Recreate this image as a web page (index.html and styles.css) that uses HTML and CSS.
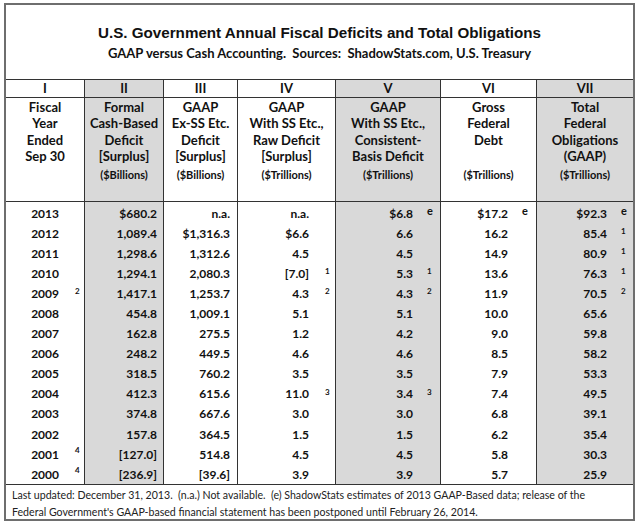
FILE: index.html
```html
<!DOCTYPE html>
<html>
<head>
<meta charset="utf-8">
<link rel="stylesheet" href="styles.css">
</head>
<body>
<div class="sheet">
  <div class="titlebox">
    <div class="title">U.S. Government Annual Fiscal Deficits and Total Obligations</div>
    <div class="subtitle">GAAP versus Cash Accounting.&nbsp; Sources:&nbsp; ShadowStats.com, U.S. Treasury</div>
  </div>
  <div class="grid">
    <div class="num c1">I</div>
    <div class="num c2 g">II</div>
    <div class="num c3">III</div>
    <div class="num c4">IV</div>
    <div class="num c5 g">V</div>
    <div class="num c6">VI</div>
    <div class="num c7 g">VII</div>

    <div class="hd c1"><div class="hl">Fiscal<br>Year<br>Ended<br>Sep 30</div></div>
    <div class="hd c2 g"><div class="hl">Formal<br>Cash-Based<br>Deficit<br>[Surplus]</div><div class="unit">($Billions)</div></div>
    <div class="hd c3"><div class="hl">GAAP<br>Ex-SS Etc.<br>Deficit<br>[Surplus]</div><div class="unit">($Billions)</div></div>
    <div class="hd c4"><div class="hl">GAAP<br>With SS Etc.,<br>Raw Deficit<br>[Surplus]</div><div class="unit">($Trillions)</div></div>
    <div class="hd c5 g"><div class="hl">GAAP<br>With SS Etc.,<br>Consistent-<br>Basis Deficit</div><div class="unit">($Trillions)</div></div>
    <div class="hd c6"><div class="hl">Gross<br>Federal<br>Debt</div><div class="unit">($Trillions)</div></div>
    <div class="hd c7 g"><div class="hl">Total<br>Federal<br>Obligations<br>(GAAP)</div><div class="unit">($Trillions)</div></div>

    <div class="d c1 first"><span>2013</span><i></i></div>
    <div class="d c2 g first"><span>$680.2</span><i></i></div>
    <div class="d c3 first"><span>n.a.</span><i></i></div>
    <div class="d c4 first"><span>n.a.</span><i></i></div>
    <div class="d c5 g first"><span>$6.8</span><i class="e">e</i></div>
    <div class="d c6 first"><span>$17.2</span><i class="e">e</i></div>
    <div class="d c7 g first"><span>$92.3</span><i class="e">e</i></div>

    <div class="d c1"><span>2012</span><i></i></div>
    <div class="d c2 g"><span>1,089.4</span><i></i></div>
    <div class="d c3"><span>$1,316.3</span><i></i></div>
    <div class="d c4"><span>$6.6</span><i></i></div>
    <div class="d c5 g"><span>6.6</span><i></i></div>
    <div class="d c6"><span>16.2</span><i></i></div>
    <div class="d c7 g"><span>85.4</span><i>1</i></div>

    <div class="d c1"><span>2011</span><i></i></div>
    <div class="d c2 g"><span>1,298.6</span><i></i></div>
    <div class="d c3"><span>1,312.6</span><i></i></div>
    <div class="d c4"><span>4.5</span><i></i></div>
    <div class="d c5 g"><span>4.5</span><i></i></div>
    <div class="d c6"><span>14.9</span><i></i></div>
    <div class="d c7 g"><span>80.9</span><i>1</i></div>

    <div class="d c1"><span>2010</span><i></i></div>
    <div class="d c2 g"><span>1,294.1</span><i></i></div>
    <div class="d c3"><span>2,080.3</span><i></i></div>
    <div class="d c4"><span>[7.0]</span><i>1</i></div>
    <div class="d c5 g"><span>5.3</span><i>1</i></div>
    <div class="d c6"><span>13.6</span><i></i></div>
    <div class="d c7 g"><span>76.3</span><i>1</i></div>

    <div class="d c1"><span>2009</span><i>2</i></div>
    <div class="d c2 g"><span>1,417.1</span><i></i></div>
    <div class="d c3"><span>1,253.7</span><i></i></div>
    <div class="d c4"><span>4.3</span><i>2</i></div>
    <div class="d c5 g"><span>4.3</span><i>2</i></div>
    <div class="d c6"><span>11.9</span><i></i></div>
    <div class="d c7 g"><span>70.5</span><i>2</i></div>

    <div class="d c1"><span>2008</span><i></i></div>
    <div class="d c2 g"><span>454.8</span><i></i></div>
    <div class="d c3"><span>1,009.1</span><i></i></div>
    <div class="d c4"><span>5.1</span><i></i></div>
    <div class="d c5 g"><span>5.1</span><i></i></div>
    <div class="d c6"><span>10.0</span><i></i></div>
    <div class="d c7 g"><span>65.6</span><i></i></div>

    <div class="d c1"><span>2007</span><i></i></div>
    <div class="d c2 g"><span>162.8</span><i></i></div>
    <div class="d c3"><span>275.5</span><i></i></div>
    <div class="d c4"><span>1.2</span><i></i></div>
    <div class="d c5 g"><span>4.2</span><i></i></div>
    <div class="d c6"><span>9.0</span><i></i></div>
    <div class="d c7 g"><span>59.8</span><i></i></div>

    <div class="d c1"><span>2006</span><i></i></div>
    <div class="d c2 g"><span>248.2</span><i></i></div>
    <div class="d c3"><span>449.5</span><i></i></div>
    <div class="d c4"><span>4.6</span><i></i></div>
    <div class="d c5 g"><span>4.6</span><i></i></div>
    <div class="d c6"><span>8.5</span><i></i></div>
    <div class="d c7 g"><span>58.2</span><i></i></div>

    <div class="d c1"><span>2005</span><i></i></div>
    <div class="d c2 g"><span>318.5</span><i></i></div>
    <div class="d c3"><span>760.2</span><i></i></div>
    <div class="d c4"><span>3.5</span><i></i></div>
    <div class="d c5 g"><span>3.5</span><i></i></div>
    <div class="d c6"><span>7.9</span><i></i></div>
    <div class="d c7 g"><span>53.3</span><i></i></div>

    <div class="d c1"><span>2004</span><i></i></div>
    <div class="d c2 g"><span>412.3</span><i></i></div>
    <div class="d c3"><span>615.6</span><i></i></div>
    <div class="d c4"><span>11.0</span><i>3</i></div>
    <div class="d c5 g"><span>3.4</span><i>3</i></div>
    <div class="d c6"><span>7.4</span><i></i></div>
    <div class="d c7 g"><span>49.5</span><i></i></div>

    <div class="d c1"><span>2003</span><i></i></div>
    <div class="d c2 g"><span>374.8</span><i></i></div>
    <div class="d c3"><span>667.6</span><i></i></div>
    <div class="d c4"><span>3.0</span><i></i></div>
    <div class="d c5 g"><span>3.0</span><i></i></div>
    <div class="d c6"><span>6.8</span><i></i></div>
    <div class="d c7 g"><span>39.1</span><i></i></div>

    <div class="d c1"><span>2002</span><i></i></div>
    <div class="d c2 g"><span>157.8</span><i></i></div>
    <div class="d c3"><span>364.5</span><i></i></div>
    <div class="d c4"><span>1.5</span><i></i></div>
    <div class="d c5 g"><span>1.5</span><i></i></div>
    <div class="d c6"><span>6.2</span><i></i></div>
    <div class="d c7 g"><span>35.4</span><i></i></div>

    <div class="d c1"><span>2001</span><i class="hi">4</i></div>
    <div class="d c2 g"><span>[127.0]</span><i></i></div>
    <div class="d c3"><span>514.8</span><i></i></div>
    <div class="d c4"><span>4.5</span><i></i></div>
    <div class="d c5 g"><span>4.5</span><i></i></div>
    <div class="d c6"><span>5.8</span><i></i></div>
    <div class="d c7 g"><span>30.3</span><i></i></div>

    <div class="d c1 last"><span>2000</span><i class="hi">4</i></div>
    <div class="d c2 g last"><span>[236.9]</span><i></i></div>
    <div class="d c3 last"><span>[39.6]</span><i></i></div>
    <div class="d c4 last"><span>3.9</span><i></i></div>
    <div class="d c5 g last"><span>3.9</span><i></i></div>
    <div class="d c6 last"><span>5.7</span><i></i></div>
    <div class="d c7 g last"><span>25.9</span><i></i></div>
  </div>
  <div class="foot">Last updated: December 31, 2013.&nbsp; (n.a.) Not available.&nbsp; (e) ShadowStats estimates of 2013 GAAP-Based data; release of the<br>Federal Government's GAAP-based financial statement has been postponed until February 26, 2014.</div>
</div>
</body>
</html>
```

FILE: styles.css
```css
html, body {
  margin: 0;
  padding: 0;
  background: #ffffff;
}

body {
  font-family: Lato, "Open Sans", sans-serif;
  color: #111;
}

.sheet {
  margin: 3px 0 0 4px;
  width: 631px;
  height: 518px;
  box-sizing: border-box;
  border: 2px solid #6e6e6e;
  display: flex;
  flex-direction: column;
  overflow: hidden;
}

.sheet > div {
  flex-shrink: 0;
}

.titlebox {
  height: 75px;
  box-sizing: border-box;
  border-bottom: 1px solid #333;
  padding-top: 18px;
  text-align: center;
}

.title {
  font-family: "Liberation Sans", Arial, sans-serif;
  font-weight: bold;
  font-size: 15.2px;
  line-height: 20px;
}

.subtitle {
  margin-top: 1px;
  font-weight: bold;
  font-size: 13px;
  line-height: 18px;
}

.grid {
  display: grid;
  grid-template-columns: 78px 79px 74px 98px 105px 96px 97px;
  grid-auto-rows: auto;
}

.grid > div {
  box-sizing: border-box;
}

.c2, .c3, .c4, .c5, .c6, .c7 {
  border-left: 1px solid #333;
}

.g {
  background: #d9d9d9;
}

.num {
  height: 18px;
  border-bottom: 1px solid #333;
  font-weight: bold;
  font-size: 13px;
  line-height: 17px;
  text-align: center;
}

.hd {
  height: 104px;
  border-bottom: 1px solid #333;
  padding-top: 1px;
  text-align: center;
  font-weight: bold;
  font-size: 13px;
  line-height: 16.3px;
}

.hl {
  height: 65.2px;
}

.unit {
  margin-top: 3px;
  font-size: 11px;
  line-height: 16px;
}

.d {
  height: 20.1px;
  display: flex;
  justify-content: flex-end;
  align-items: center;
  font-weight: bold;
  font-size: 12px;
}

.d.first {
  padding-top: 1px;
  height: 21.1px;
}

.d span {
  white-space: nowrap;
}

.d i {
  font-style: normal;
  font-size: 8px;
  align-self: flex-start;
  padding-top: 3px;
  box-sizing: border-box;
}

.d.first i {
  padding-top: 4px;
}

.d i.e {
  font-size: 11px;
  padding-top: 1px;
}

.d i.hi {
  padding-top: 1px;
}

.c1 i { width: 25px; padding-left: 16px; }
.c2 i { width: 6px; }
.c3 i { width: 7px; }
.c4 i { width: 26px; padding-left: 16px; }
.c5 i { width: 27px; padding-left: 14px; }
.c6 i { width: 28px; padding-left: 14px; }
.c7 i { width: 26px; padding-left: 14px; }

.foot {
  flex: 1 0 auto;
  border-top: 1px solid #333;
  padding: 2px 0 0 6px;
  font-size: 10.6px;
  line-height: 17px;
  color: #222;
  white-space: nowrap;
}
```
